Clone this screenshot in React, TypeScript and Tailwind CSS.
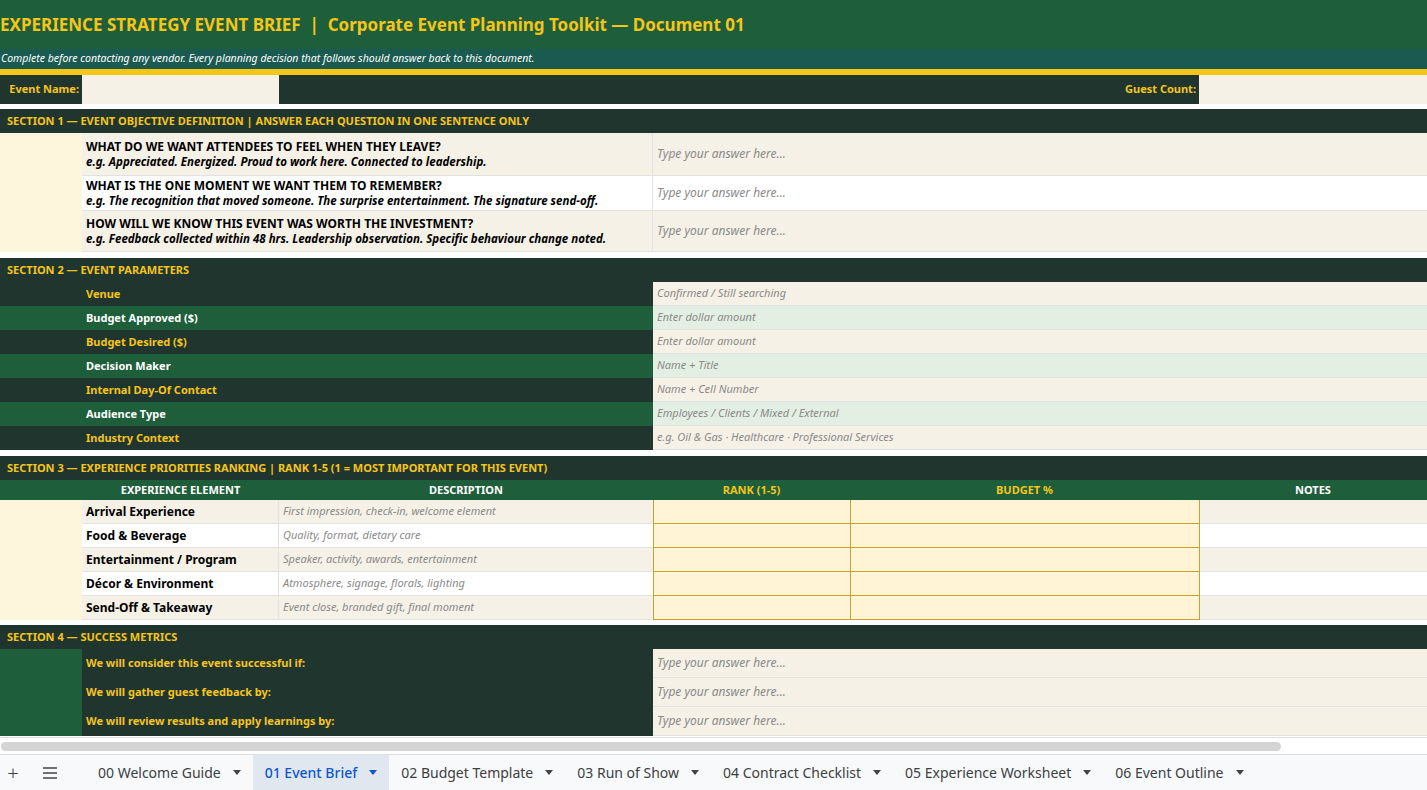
import React from "react";

const cols = "grid grid-cols-[82px_197px_374px_197px_349px_1fr]";
const Y = "text-[#f5c518]";

function SecHead({ t }: { t: string }) {
  return (
    <div className={`h-[24px] bg-[#21352f] ${Y} text-[11px] font-bold flex items-center pl-[7px]`}>{t}</div>
  );
}

const params = [
  ["Venue", "Confirmed / Still searching"],
  ["Budget Approved ($)", "Enter dollar amount"],
  ["Budget Desired ($)", "Enter dollar amount"],
  ["Decision Maker", "Name + Title"],
  ["Internal Day-Of Contact", "Name + Cell Number"],
  ["Audience Type", "Employees / Clients / Mixed / External"],
  ["Industry Context", "e.g. Oil & Gas · Healthcare · Professional Services"],
];

const qs = [
  ["WHAT DO WE WANT ATTENDEES TO FEEL WHEN THEY LEAVE?", "e.g. Appreciated. Energized. Proud to work here. Connected to leadership.", "h-[43px]", "bg-[#f5f1e6]"],
  ["WHAT IS THE ONE MOMENT WE WANT THEM TO REMEMBER?", "e.g. The recognition that moved someone. The surprise entertainment. The signature send-off.", "h-[35px]", "bg-white"],
  ["HOW WILL WE KNOW THIS EVENT WAS WORTH THE INVESTMENT?", "e.g. Feedback collected within 48 hrs. Leadership observation. Specific behaviour change noted.", "h-[41px]", "bg-[#f5f1e6]"],
];

const elems = [
  ["Arrival Experience", "First impression, check-in, welcome element"],
  ["Food & Beverage", "Quality, format, dietary care"],
  ["Entertainment / Program", "Speaker, activity, awards, entertainment"],
  ["Décor & Environment", "Atmosphere, signage, florals, lighting"],
  ["Send-Off & Takeaway", "Event close, branded gift, final moment"],
];

const metrics = [
  "We will consider this event successful if:",
  "We will gather guest feedback by:",
  "We will review results and apply learnings by:",
];

const tabs = ["00 Welcome Guide", "01 Event Brief", "02 Budget Template", "03 Run of Show", "04 Contract Checklist", "05 Experience Worksheet", "06 Event Outline"];

export default function App() {
  return (
    <div className="w-[1427px] h-[790px] overflow-hidden bg-white flex flex-col font-['Liberation_Sans',Arial,sans-serif]">
      <div className="flex-1 overflow-hidden">
        <div className={`h-[49px] bg-[#1e5e3b] ${Y} text-[17px] font-bold flex items-center`}>
          EXPERIENCE STRATEGY EVENT BRIEF &nbsp;|&nbsp; Corporate Event Planning Toolkit — Document 01
        </div>
        <div className="h-[20px] bg-[#1b5a50] text-white text-[10.5px] italic flex items-center pl-[1px]">
          Complete before contacting any vendor. Every planning decision that follows should answer back to this document.
        </div>
        <div className="h-[6px] bg-[#f5c518]" />
        <div className={`${cols} h-[29px] text-[11px] font-bold ${Y}`}>
          <div className="bg-[#21352f] flex items-center justify-end pr-[3px]">Event Name:</div>
          <div className="bg-[#f5f1e6]" />
          <div className="col-span-2 bg-[#21352f] flex items-center justify-end pr-[3px] -mr-[1px]">Event Date &amp; Time:</div>
          <div className="hidden" />
          <div className="bg-[#21352f] flex items-center justify-end pr-[3px] -ml-[197px] relative" style={{}}>Guest Count:</div>
          <div className="bg-[#f5f1e6]" />
        </div>
        <div className="h-[5px]" />
        <SecHead t="SECTION 1 — EVENT OBJECTIVE DEFINITION  |  ANSWER EACH QUESTION IN ONE SENTENCE ONLY" />
        <div className="flex">
          <div className="w-[82px] bg-[#fdf6dc]" />
          <div className="flex-1 flex flex-col">
            {qs.map(([q, e, h, bg], i) => (
              <div key={i} className={`flex ${h} ${bg} border-b border-[#e2e2e2]`}>
                <div className="w-[571px] border-r border-[#e2e2e2] flex flex-col justify-center pl-[4px] text-black leading-[15px]">
                  <div className="text-[12px] font-bold">{q}</div>
                  <div className="text-[11.5px] font-bold italic">{e}</div>
                </div>
                <div className="flex-1 flex items-center pl-[4px] text-[12px] italic text-[#8a8a8a]">Type your answer here...</div>
              </div>
            ))}
          </div>
        </div>
        <div className="h-[6px]" />
        <SecHead t="SECTION 2 — EVENT PARAMETERS" />
        {params.map(([l, v], i) => {
          const g = i % 2 === 1;
          return (
            <div key={i} className="flex h-[24px] text-[11px]">
              <div className={`w-[653px] ${g ? "bg-[#1e5e3b] text-white" : "bg-[#21352f] text-[#f5c518]"} font-bold flex items-center pl-[86px]`}>{l}</div>
              <div className={`flex-1 ${g ? "bg-[#e3efe3]" : "bg-[#f5f1e6]"} border-b border-[#e2e2e2] italic text-[#8a8a8a] flex items-center pl-[4px]`}>{v}</div>
            </div>
          );
        })}
        <div className="h-[6px]" />
        <SecHead t="SECTION 3 — EXPERIENCE PRIORITIES RANKING  |  RANK 1-5 (1 = MOST IMPORTANT FOR THIS EVENT)" />
        <div className={`${cols} h-[20px] bg-[#1e5e3b] text-[11px] font-bold`}>
          <div className="col-span-2 text-white flex items-center justify-center pl-[82px]">EXPERIENCE ELEMENT</div>
          <div className="text-white flex items-center justify-center">DESCRIPTION</div>
          <div className={`${Y} flex items-center justify-center`}>RANK (1-5)</div>
          <div className={`${Y} flex items-center justify-center`}>BUDGET %</div>
          <div className="text-white flex items-center justify-center">NOTES</div>
        </div>
        <div className="flex">
          <div className="w-[82px] bg-[#fdf6dc]" />
          <div className="flex-1">
            {elems.map(([a, b], i) => (
              <div key={i} className={`flex h-[24px] ${i % 2 ? "bg-white" : "bg-[#f5f1e6]"}`}>
                <div className="w-[197px] border-r border-b border-[#e2e2e2] flex items-center pl-[4px] text-[12px] font-bold text-black">{a}</div>
                <div className="w-[374px] border-b border-[#e2e2e2] flex items-center pl-[4px] text-[11px] italic text-[#8a8a8a]">{b}</div>
                <div className="w-[197px] bg-[#fff5d6] border-l border-b border-[#c9a227]" />
                <div className="w-[350px] bg-[#fff5d6] border-l border-r border-b border-[#c9a227]" />
                <div className="flex-1 border-b border-[#e2e2e2]" />
              </div>
            ))}
          </div>
        </div>
        <div className="h-[5px]" />
        <SecHead t="SECTION 4 — SUCCESS METRICS" />
        <div className="flex">
          <div className="w-[82px] bg-[#1e5e3b]" />
          <div className="flex-1">
            {metrics.map((m, i) => (
              <div key={i} className="flex h-[29px]">
                <div className={`w-[571px] bg-[#21352f] ${Y} text-[11px] font-bold flex items-center pl-[4px]`}>{m}</div>
                <div className="flex-1 bg-[#f5f1e6] border-b border-[#e2e2e2] text-[12px] italic text-[#8a8a8a] flex items-center pl-[4px]">Type your answer here...</div>
              </div>
            ))}
          </div>
        </div>
      </div>
      <div className="h-[17px] bg-white border-t border-[#e0e0e0] flex items-center pl-[1px]">
        <div className="w-[1280px] h-[9px] rounded-full bg-[#d4d4d4]" />
      </div>
      <div className="h-[36px] bg-[#f8f9fa] border-t border-[#e0e0e0] flex items-center font-['Roboto',sans-serif] text-[14px] text-[#3c4043]">
        <span className="w-[26px] text-center text-[20px] font-light">+</span>
        <span className="w-[48px] flex justify-center">
          <svg width="16" height="12" viewBox="0 0 16 12"><path d="M1 1h14M1 6h14M1 11h14" stroke="#444" strokeWidth="1.5" /></svg>
        </span>
        <div className="flex h-full pl-[12px]">
          {tabs.map((t, i) => (
            <div key={t} className={`flex items-center gap-[12px] px-[12px] h-full ${i === 1 ? "bg-[#e1e7ef] text-[#0b57d0] font-medium" : ""}`}>
              {t}
              <svg width="8" height="5" viewBox="0 0 8 5"><path d="M0 0h8L4 5z" fill={i === 1 ? "#0b57d0" : "#444"} /></svg>
            </div>
          ))}
        </div>
      </div>
    </div>
  );
}
